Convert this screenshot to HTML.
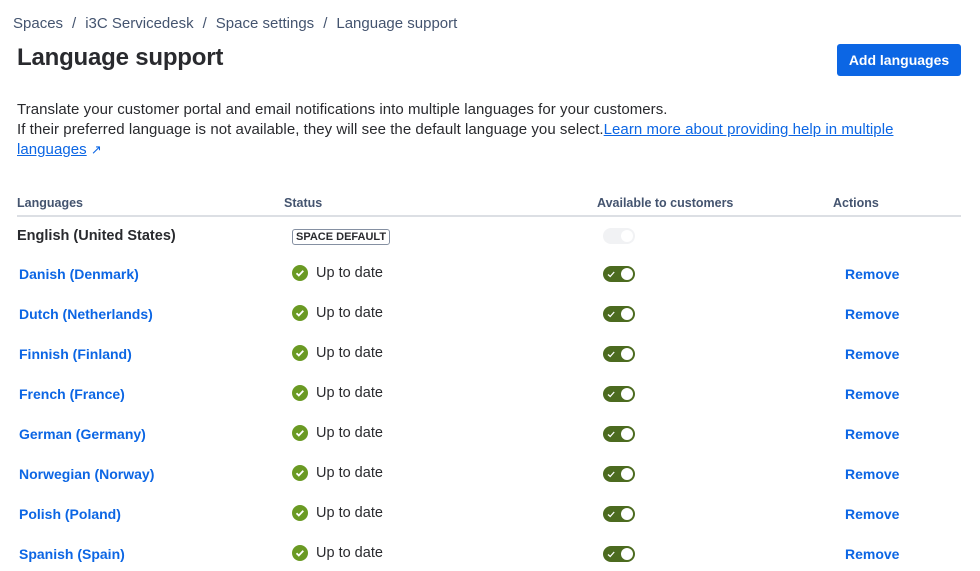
<!DOCTYPE html>
<html><head><meta charset="utf-8"><style>
*{margin:0;padding:0;box-sizing:border-box}
body{width:980px;height:571px;overflow:hidden;background:#fff;font-family:"Liberation Sans",sans-serif;color:#172b4d;position:relative}
.a{position:absolute;white-space:nowrap}
.bc{top:15px;left:13px;font-size:15px;color:#44546f}
.bc span{margin:0 9px}
h1{position:absolute;left:17px;top:44px;font-size:24px;font-weight:bold;color:#292a2e;letter-spacing:-0.2px}
.btn{position:absolute;left:837px;top:44px;width:124px;height:32px;background:#0c66e4;border-radius:3px;color:#fff;font-weight:bold;font-size:14px;text-align:center;line-height:32px}
.p{left:17px;font-size:15px;color:#292a2e;letter-spacing:0.05px}
a{color:#0c66e4}
.th{top:196px;font-size:12.5px;font-weight:bold;color:#44546f}
.line{position:absolute;left:17px;top:215px;width:944px;height:2px;background:#dcdfe4}
.lang{left:19px;font-size:14px;color:#0c66e4;font-weight:bold}
.st{left:292px;font-size:14.5px;color:#292a2e;display:flex;align-items:center}
.st i{display:inline-block;width:16px;height:16px;border-radius:50%;background:#6a9a23;margin-right:8px;position:relative}
.tg{left:603px;width:32px;height:16px;border-radius:8px;background:#4c6b1f}
.tg::after{content:"";position:absolute;right:2px;top:2px;width:12px;height:12px;border-radius:50%;background:#fff}
.rm{left:845px;font-size:14px;color:#0c66e4;font-weight:bold}
</style></head><body>
<div class="a bc">Spaces<span>/</span>i3C Servicedesk<span>/</span>Space settings<span>/</span>Language support</div>
<h1>Language support</h1>
<div class="btn">Add languages</div>
<div class="a p" style="top:101px">Translate your customer portal and email notifications into multiple languages for your customers.</div>
<div class="a p" style="top:121px">If their preferred language is not available, they will see the default language you select.<a href="#">Learn more about providing help in multiple</a></div>
<div class="a p" style="top:141px"><a href="#">languages</a> <span style="color:#0c66e4;font-size:13px">&#x2197;</span></div>
<div class="a th" style="left:17px">Languages</div>
<div class="a th" style="left:284px">Status</div>
<div class="a th" style="left:597px">Available to customers</div>
<div class="a th" style="left:833px">Actions</div>
<div class="line"></div>
<div class="a" style="left:17px;top:228px;font-size:14.5px;font-weight:bold;color:#292a2e">English (United States)</div>
<div class="a" style="left:292px;top:229px;border:1px solid #8590a2;border-radius:3px;font-size:11px;font-weight:bold;padding:1px 3px;color:#292a2e">SPACE DEFAULT</div>
<div class="a tg" style="top:228px;background:#f1f2f4"></div>
<div id="rows"></div>
<script>
var L=["Danish (Denmark)","Dutch (Netherlands)","Finnish (Finland)","French (France)","German (Germany)","Norwegian (Norway)","Polish (Poland)","Spanish (Spain)"],h="";
L.forEach(function(n,i){var y=266+i*40;
h+='<div class="a lang" style="top:'+y+'px">'+n+'</div><div class="a st" style="top:'+(y-1)+'px"><i><svg width="16" height="16" viewBox="0 0 16 16" style="position:absolute;left:0;top:0"><path d="M4.5 8.2l2.3 2.3 4.5-4.7" stroke="#fff" stroke-width="1.8" fill="none"/></svg></i>Up to date</div><div class="a tg" style="top:'+(y)+'px"><svg width="12" height="16" viewBox="0 0 12 16" style="position:absolute;left:4px;top:0"><path d="M1 8.5l2.2 2 4-4.5" stroke="#fff" stroke-width="1.3" fill="none"/></svg></div><div class="a rm" style="top:'+y+'px">Remove</div>';});
document.getElementById("rows").innerHTML=h;
</script>
</body></html>
